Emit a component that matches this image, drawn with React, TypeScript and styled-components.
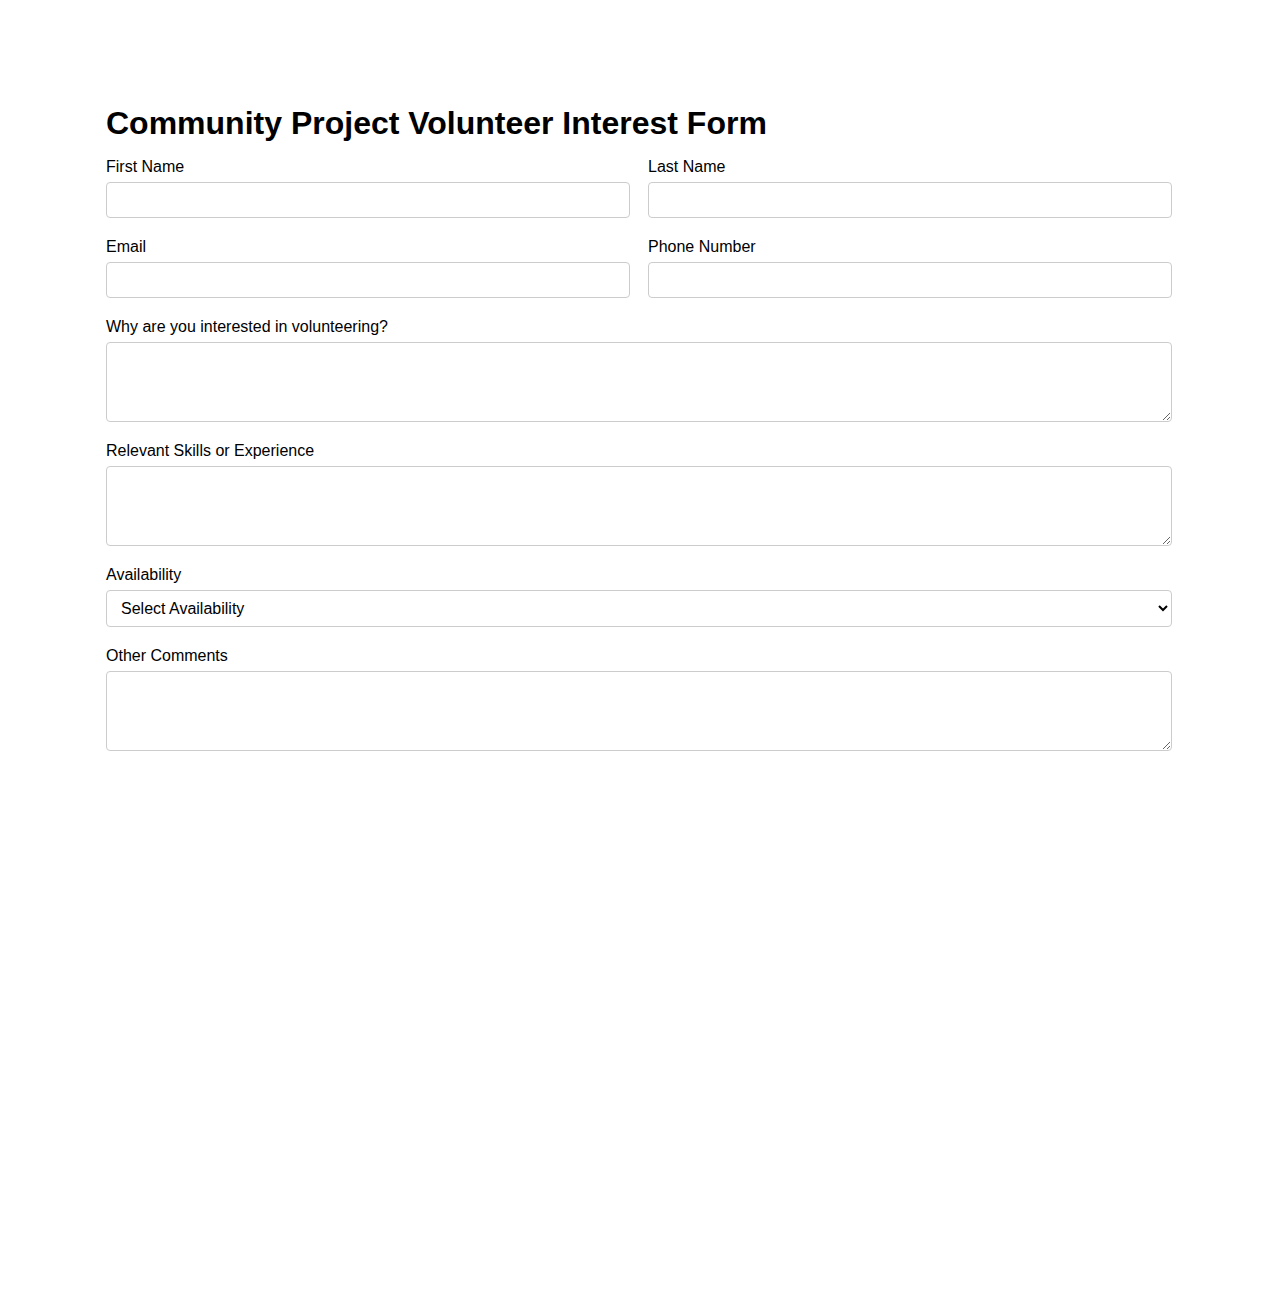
import React from "react";
import styled, { createGlobalStyle } from "styled-components";

const GlobalStyle = createGlobalStyle`
  html, body {
    margin: 0;
    padding: 0;
    background: #ffffff;
  }
  body {
    font-family: "Liberation Sans", Arial, sans-serif;
    color: #000000;
  }
  *, *::before, *::after {
    box-sizing: border-box;
  }
`;

const Page = styled.main`
  width: 1066px;
  margin: 0 auto;
  padding-top: 105px;
`;

const Title = styled.h1`
  margin: 0 0 16px;
  font-size: 32px;
  font-weight: 700;
  line-height: normal;
`;

const Form = styled.form`
  display: flex;
  flex-direction: column;
`;

const Row = styled.div`
  display: grid;
  grid-template-columns: 1fr 1fr;
  column-gap: 18px;
`;

const Field = styled.div`
  display: flex;
  flex-direction: column;
  margin-bottom: 20px;
`;

const Label = styled.label`
  display: block;
  font-size: 16px;
  line-height: 18px;
  margin-bottom: 6px;
`;

const controlBase = `
  width: 100%;
  font-family: "Liberation Sans", Arial, sans-serif;
  font-size: 16px;
  color: #000;
  background: #fff;
  border: 1px solid #cccccc;
  border-radius: 4px;
  padding: 8px 10px;
  outline: none;
`;

const Input = styled.input`
  ${controlBase}
  height: 36px;
`;

const TextArea = styled.textarea`
  ${controlBase}
  height: 80px;
  resize: vertical;
`;

const Select = styled.select`
  ${controlBase}
  height: 37px;
`;

export default function App() {
  return (
    <>
      <GlobalStyle />
      <Page>
        <Title>Community Project Volunteer Interest Form</Title>
        <Form onSubmit={(e) => e.preventDefault()}>
          <Row>
            <Field>
              <Label htmlFor="firstName">First Name</Label>
              <Input id="firstName" type="text" />
            </Field>
            <Field>
              <Label htmlFor="lastName">Last Name</Label>
              <Input id="lastName" type="text" />
            </Field>
          </Row>
          <Row>
            <Field>
              <Label htmlFor="email">Email</Label>
              <Input id="email" type="email" />
            </Field>
            <Field>
              <Label htmlFor="phone">Phone Number</Label>
              <Input id="phone" type="tel" />
            </Field>
          </Row>
          <Field>
            <Label htmlFor="why">Why are you interested in volunteering?</Label>
            <TextArea id="why" />
          </Field>
          <Field>
            <Label htmlFor="skills">Relevant Skills or Experience</Label>
            <TextArea id="skills" />
          </Field>
          <Field>
            <Label htmlFor="availability">Availability</Label>
            <Select id="availability" defaultValue="">
              <option value="">Select Availability</option>
              <option value="weekdays">Weekdays</option>
              <option value="weekends">Weekends</option>
              <option value="evenings">Evenings</option>
              <option value="flexible">Flexible</option>
            </Select>
          </Field>
          <Field>
            <Label htmlFor="comments">Other Comments</Label>
            <TextArea id="comments" />
          </Field>
        </Form>
      </Page>
    </>
  );
}
